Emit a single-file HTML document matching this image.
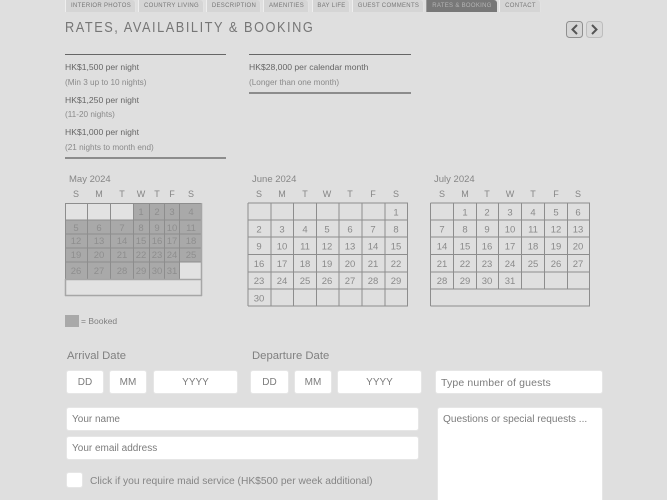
<!DOCTYPE html>
<html>
<head>
<meta charset="utf-8">
<style>
html,body{margin:0;padding:0;width:667px;height:500px;overflow:hidden;background:#dfdfdf;}
body{position:relative;font-family:"Liberation Sans",sans-serif;color:#777;}
#w{position:absolute;left:0;top:0;width:667px;height:500px;overflow:hidden;filter:blur(.35px);}
.a{position:absolute;white-space:nowrap;}
.tab{position:absolute;top:0;height:12px;background:#d5d5d5;border-left:1px solid #eee;border-radius:0 3px 0 0;font-size:6px;letter-spacing:.3px;line-height:13px;text-align:center;color:#777;box-sizing:border-box;box-shadow:inset -1px 0 0 #e2e2e2;white-space:nowrap;overflow:hidden;}
.tab.on{background:#787878;color:#b4b4b4;border-left-color:#999;box-shadow:none;}
.rule{position:absolute;height:1px;background:#666;}
.rule2{position:absolute;height:2px;background:#8c8c8c;}
.p{position:absolute;font-size:8.6px;color:#666;white-space:nowrap;line-height:11px;}
.s{position:absolute;font-size:8.2px;color:#8a8a8a;white-space:nowrap;line-height:11px;}
.in{position:absolute;background:#fff;border-radius:2px;box-shadow:0 0 0 1px #e6e6e6;font-size:10px;color:#7c7c7c;line-height:23px;height:22px;box-sizing:border-box;white-space:nowrap;}
.c{text-align:center;}
.l{padding-left:5px;}
.lab{position:absolute;font-size:11.3px;color:#808080;white-space:nowrap;line-height:14px;}
svg{position:absolute;left:0;top:0;}
svg text{font-family:"Liberation Sans",sans-serif;}
</style>
</head>
<body>
<div id="w">
<div class="tab" style="left:65px;width:71px">INTERIOR PHOTOS</div>
<div class="tab" style="left:138px;width:66px">COUNTRY LIVING</div>
<div class="tab" style="left:206px;width:55px">DESCRIPTION</div>
<div class="tab" style="left:263px;width:46px">AMENITIES</div>
<div class="tab" style="left:312px;width:38px">BAY LIFE</div>
<div class="tab" style="left:352px;width:72px">GUEST COMMENTS</div>
<div class="tab on" style="left:426px;width:71px">RATES &amp; BOOKING</div>
<div class="tab" style="left:499px;width:42px">CONTACT</div>

<div class="a" style="left:65px;top:20px;font-size:14.5px;letter-spacing:1.75px;line-height:17px;color:#767676;transform:scaleX(.88);transform-origin:0 0">RATES, AVAILABILITY &amp; BOOKING</div>

<svg width="667" height="500" viewBox="0 0 667 500">
<rect x="566.5" y="21.5" width="16" height="16" rx="3" fill="#d6d6d6" stroke="#8f8f8f"/>
<rect x="586.5" y="21.5" width="16" height="16" rx="3" fill="#d9d9d9" stroke="#bdbdbd"/>
<path d="M577 25L572.500 29.500L577 34" fill="none" stroke="#555" stroke-width="2"/>
<path d="M592 25L596.500 29.500L592 34" fill="none" stroke="#555" stroke-width="2"/>

<!-- May -->
<rect x="65" y="203" width="137" height="93" fill="#e2e2e2"/>
<path d="M133 203H202V262H179V279H133Z M65 220H133V279H65Z" fill="#a9a9a9"/>
<path d="M164 262H179L164 279Z" fill="#a9a9a9"/>
<path d="M65 203.500H202M65 220H202M65 234H202M65 248H202M65 262H202M65.500 203V279M87.500 203V279M110.500 203V279M133.500 203V279M149.500 203V279M164.500 203V279M179.500 203V279" fill="none" stroke="#8d8d8d" stroke-width="1"/>
<path d="M65 279.500H202M65 295.500H202M65.500 279V296M201.500 203V296" fill="none" stroke="#a6a6a6" stroke-width="1.500"/>
<g font-size="9.500" fill="#8e8e8e" text-anchor="middle">
<text x="141" y="215">1</text><text x="157" y="215">2</text><text x="172" y="215">3</text><text x="191" y="215">4</text>
<text x="76" y="231">5</text><text x="99" y="231">6</text><text x="122" y="231">7</text><text x="141" y="231">8</text><text x="157" y="231">9</text><text x="172" y="231">10</text><text x="191" y="231">11</text>
<text x="76" y="244">12</text><text x="99" y="244">13</text><text x="122" y="244">14</text><text x="141" y="244">15</text><text x="157" y="244">16</text><text x="172" y="244">17</text><text x="191" y="244">18</text>
<text x="76" y="258">19</text><text x="99" y="258">20</text><text x="122" y="258">21</text><text x="141" y="258">22</text><text x="157" y="258">23</text><text x="172" y="258">24</text><text x="191" y="258">25</text>
<text x="76" y="274">26</text><text x="99" y="274">27</text><text x="122" y="274">28</text><text x="141" y="274">29</text><text x="157" y="274">30</text><text x="172" y="274">31</text>
</g>
<g font-size="9" fill="#858585" text-anchor="middle">
<text x="76" y="197">S</text><text x="99" y="197">M</text><text x="122" y="197">T</text><text x="141" y="197">W</text><text x="157" y="197">T</text><text x="172" y="197">F</text><text x="191" y="197">S</text>
</g>
<text x="69" y="182" font-size="9.500" fill="#868686">May 2024</text>

<!-- June -->
<path d="M248 203H408M248 220H408M248 237H408M248 254.500H408M248 272H408M248 289H408M248 306H408M248 203V306M271 203V306M293.500 203V306M316.500 203V306M339 203V306M362 203V306M385 203V306M407.500 203V306" fill="none" stroke="#8d8d8d" stroke-width="1"/>
<g font-size="9.500" fill="#8a8a8a" text-anchor="middle">
<text x="396" y="215.500">1</text>
<text x="259" y="232.500">2</text><text x="282" y="232.500">3</text><text x="305" y="232.500">4</text><text x="327" y="232.500">5</text><text x="350" y="232.500">6</text><text x="373" y="232.500">7</text><text x="396" y="232.500">8</text>
<text x="259" y="249.500">9</text><text x="282" y="249.500">10</text><text x="305" y="249.500">11</text><text x="327" y="249.500">12</text><text x="350" y="249.500">13</text><text x="373" y="249.500">14</text><text x="396" y="249.500">15</text>
<text x="259" y="267">16</text><text x="282" y="267">17</text><text x="305" y="267">18</text><text x="327" y="267">19</text><text x="350" y="267">20</text><text x="373" y="267">21</text><text x="396" y="267">22</text>
<text x="259" y="284">23</text><text x="282" y="284">24</text><text x="305" y="284">25</text><text x="327" y="284">26</text><text x="350" y="284">27</text><text x="373" y="284">28</text><text x="396" y="284">29</text>
<text x="259" y="301.500">30</text>
</g>
<g font-size="9" fill="#858585" text-anchor="middle">
<text x="259" y="197">S</text><text x="282" y="197">M</text><text x="305" y="197">T</text><text x="327" y="197">W</text><text x="350" y="197">T</text><text x="373" y="197">F</text><text x="396" y="197">S</text>
</g>
<text x="252" y="182" font-size="9.500" fill="#868686">June 2024</text>

<!-- July -->
<path d="M430.500 203H590M430.500 220H590M430.500 237H590M430.500 254.500H590M430.500 272H590M430.500 289H590M430.500 306H590M430.500 203V306M453.500 203V289M476.500 203V289M498.500 203V289M521.500 203V289M544.500 203V289M567.500 203V289M589.500 203V306" fill="none" stroke="#8d8d8d" stroke-width="1"/>
<g font-size="9.500" fill="#8a8a8a" text-anchor="middle">
<text x="465" y="215.500">1</text><text x="487" y="215.500">2</text><text x="510" y="215.500">3</text><text x="533" y="215.500">4</text><text x="556" y="215.500">5</text><text x="578" y="215.500">6</text>
<text x="442" y="232.500">7</text><text x="465" y="232.500">8</text><text x="487" y="232.500">9</text><text x="510" y="232.500">10</text><text x="533" y="232.500">11</text><text x="556" y="232.500">12</text><text x="578" y="232.500">13</text>
<text x="442" y="249.500">14</text><text x="465" y="249.500">15</text><text x="487" y="249.500">16</text><text x="510" y="249.500">17</text><text x="533" y="249.500">18</text><text x="556" y="249.500">19</text><text x="578" y="249.500">20</text>
<text x="442" y="267">21</text><text x="465" y="267">22</text><text x="487" y="267">23</text><text x="510" y="267">24</text><text x="533" y="267">25</text><text x="556" y="267">26</text><text x="578" y="267">27</text>
<text x="442" y="284">28</text><text x="465" y="284">29</text><text x="487" y="284">30</text><text x="510" y="284">31</text>
</g>
<g font-size="9" fill="#858585" text-anchor="middle">
<text x="442" y="197">S</text><text x="465" y="197">M</text><text x="487" y="197">T</text><text x="510" y="197">W</text><text x="533" y="197">T</text><text x="556" y="197">F</text><text x="578" y="197">S</text>
</g>
<text x="434" y="182" font-size="9.500" fill="#868686">July 2024</text>
</svg>

<div class="rule" style="left:65px;top:54px;width:161px"></div>
<div class="rule" style="left:249px;top:54px;width:162px"></div>
<div class="p" style="left:65px;top:62px">HK$1,500 per night</div>
<div class="s" style="left:65px;top:77px">(Min 3 up to 10 nights)</div>
<div class="p" style="left:65px;top:95px">HK$1,250 per night</div>
<div class="s" style="left:65px;top:109px">(11-20 nights)</div>
<div class="p" style="left:65px;top:127px">HK$1,000 per night</div>
<div class="s" style="left:65px;top:142px">(21 nights to month end)</div>
<div class="rule2" style="left:65px;top:157px;width:161px"></div>
<div class="p" style="left:249px;top:62px">HK$28,000 per calendar month</div>
<div class="s" style="left:249px;top:77px">(Longer than one month)</div>
<div class="rule2" style="left:249px;top:92px;width:162px"></div>

<div class="a" style="left:65px;top:315px;width:14px;height:12px;background:#a9a9a9"></div>
<div class="a" style="left:81px;top:316px;font-size:8.500px;line-height:11px;color:#808080">= Booked</div>

<div class="lab" style="left:67px;top:349px">Arrival Date</div>
<div class="lab" style="left:252px;top:349px">Departure Date</div>

<div class="in c" style="left:67px;top:371px;width:36px">DD</div>
<div class="in c" style="left:110px;top:371px;width:36px">MM</div>
<div class="in c" style="left:154px;top:371px;width:83px">YYYY</div>
<div class="in c" style="left:251px;top:371px;width:37px">DD</div>
<div class="in c" style="left:295px;top:371px;width:36px">MM</div>
<div class="in c" style="left:338px;top:371px;width:83px">YYYY</div>
<div class="in l" style="left:436px;top:371px;width:166px;font-size:10.500px;letter-spacing:.15px;line-height:24px">Type number of guests</div>
<div class="in l" style="left:67px;top:408px;width:351px">Your name</div>
<div class="in l" style="left:67px;top:437px;width:351px">Your email address</div>
<div class="in" style="left:438px;top:408px;width:164px;height:100px;padding-left:5px;font-size:10.100px">Questions or special requests ...</div>
<div class="in" style="left:67px;top:473px;width:15px;height:14px"></div>
<div class="a" style="left:90px;top:475px;font-size:10.250px;line-height:14px;color:#858585">Click if you require maid service (HK$500 per week additional)</div>
</div>
</body>
</html>
